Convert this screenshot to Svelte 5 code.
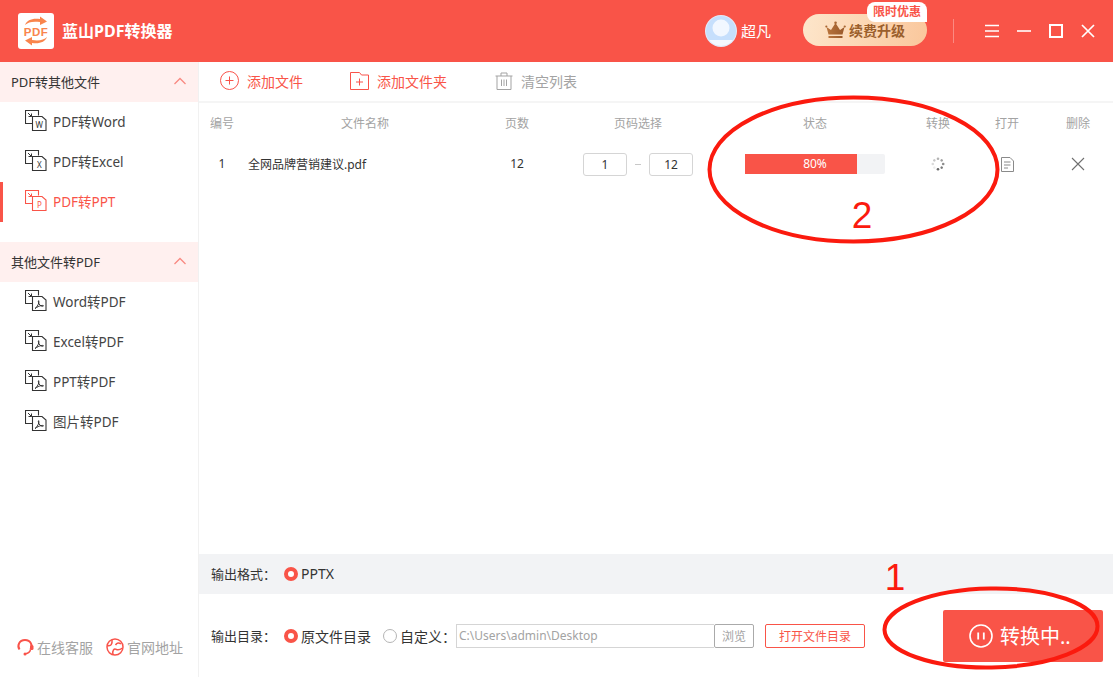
<script>
  const groups = [
    {
      title: 'PDF转其他文件',
      items: [
        { label: 'PDF转Word', mark: 'W' },
        { label: 'PDF转Excel', mark: 'X' },
        { label: 'PDF转PPT', mark: 'P', active: true }
      ]
    },
    {
      title: '其他文件转PDF',
      items: [
        { label: 'Word转PDF' },
        { label: 'Excel转PDF' },
        { label: 'PPT转PDF' },
        { label: '图片转PDF' }
      ]
    }
  ];
  const heads = ['编号', '文件名称', '页数', '页码选择', '状态', '转换', '打开', '删除'];
  const spinner = [0, 45, 90, 135, 180, 225, 270, 315];
</script>

<div class="app">
  <header class="topbar">
    <div class="logo">
      <svg width="36" height="36" viewBox="0 0 36 36">
        <rect width="36" height="36" rx="3" fill="#fff" />
        <path d="M7 12 C9 7 14 5 22 6 V3.500 L29 8.500 L22 12 V9 C15 8 10 9 7 12Z" fill="#f9854d" />
        <path d="M29 24 C27 29 22 31 14 30 V32.500 L7 27.500 L14 24 V27 C21 28 26 27 29 24Z" fill="#f9854d" />
        <text x="18" y="22.500" text-anchor="middle" class="logo-text">PDF</text>
      </svg>
    </div>
    <div class="app-name">蓝山PDF转换器</div>
    <div class="top-right">
      <div class="avatar">
        <svg width="32" height="32" viewBox="0 0 32 32">
          <defs><clipPath id="av"><circle cx="16" cy="16" r="15" /></clipPath></defs>
          <circle cx="16" cy="16" r="16" fill="#e4eaf8" />
          <circle cx="16" cy="16" r="15" fill="#c6dffc" />
          <g clip-path="url(#av)">
            <circle cx="16" cy="13" r="8.500" fill="#f1f7ff" />
            <rect x="0" y="25" width="32" height="8" fill="#f4f8fe" />
          </g>
        </svg>
      </div>
      <span class="user">超凡</span>
      <button class="vip">
        <svg width="21" height="18" viewBox="0 0 21 18">
          <defs>
            <linearGradient id="crown" x1="0" x2="1" y1="0" y2="0">
              <stop offset="0" stop-color="#b9743c" />
              <stop offset="1" stop-color="#99592a" />
            </linearGradient>
          </defs>
          <path d="M1.500 6 L6 9 L10.500 2 L15 9 L19.500 6 L17.500 13.500 H3.500Z" fill="url(#crown)" />
          <circle cx="10.500" cy="1.800" r="1.300" fill="url(#crown)" />
          <circle cx="1.300" cy="5.500" r="1.100" fill="url(#crown)" />
          <circle cx="19.700" cy="5.500" r="1.100" fill="url(#crown)" />
          <rect x="3.500" y="15" width="14" height="2" fill="url(#crown)" />
        </svg>
        续费升级
        <span class="promo">限时优惠</span>
      </button>
      <i class="sep"></i>
      <div class="win-btns">
        <svg width="14" height="14" viewBox="0 0 14 14"><path d="M0 1.500H14M0 7H14M0 12.500H14" stroke="#fff" stroke-width="1.600" fill="none" /></svg>
        <svg width="14" height="14" viewBox="0 0 14 14"><path d="M0 7H14" stroke="#fff" stroke-width="1.600" fill="none" /></svg>
        <svg width="14" height="14" viewBox="0 0 14 14"><rect x="1" y="1" width="12" height="12" stroke="#fff" stroke-width="2" fill="none" /></svg>
        <svg width="14" height="14" viewBox="0 0 14 14"><path d="M1 1L13 13M13 1L1 13" stroke="#fff" stroke-width="1.700" fill="none" /></svg>
      </div>
    </div>
  </header>

  <div class="body">
    <aside class="sidebar">
      <div class="nav">
        {#each groups as group}
          <section class="group">
            <div class="group-title">
              <span>{group.title}</span>
              <svg width="14" height="8" viewBox="0 0 14 8"><path d="M1.500 7L7 1.500L12.500 7" stroke="#f98a82" stroke-width="1.300" fill="none" /></svg>
            </div>
            {#each group.items as item}
              <div class="nav-item" class:active={item.active}>
                <svg width="22" height="22" viewBox="0 0 22 22" fill="none" stroke="currentColor" class="file-icon">
                  <path d="M7 13.500H0.500V0.500H13.500V5.500" stroke-width="1.100" />
                  <path d="M3 3L6.500 6.500M6.500 3.500V6.500H3.500" stroke-width="1" />
                  <path d="M7.500 6.500H17L21 10V20.500H7.500Z" fill="#fff" stroke-width="1.100" />
                  {#if item.mark}
                    <text x="14.300" y="17.500" text-anchor="middle" class="file-mark">{item.mark}</text>
                  {:else}
                    <path d="M10 18.500C12.500 17 14.500 12.500 13.800 10.800C13.200 10 12.800 12.500 15 15.200C16 16.300 18.300 16.500 18.500 15.800C18.300 15 14.500 15.300 10 18.500Z" stroke-width="1" />
                  {/if}
                </svg>
                <span>{item.label}</span>
              </div>
            {/each}
          </section>
        {/each}
      </div>
      <div class="support">
        <span class="link">
          <svg width="18" height="18" viewBox="0 0 18 18" fill="none" stroke="#f9534a" stroke-width="2">
            <path d="M3.500 11.500C1 8 3 2 9 2C15 2 17 8 14.500 11.500" />
            <path d="M14.500 11.500C14 14 12 15.500 9.500 15.800" stroke-width="1.400" />
            <rect x="14" y="7" width="3.500" height="5" rx="1.500" fill="#f9534a" stroke="none" />
            <circle cx="9" cy="16" r="1.500" fill="#f9534a" stroke="none" />
          </svg>
          在线客服
        </span>
        <span class="link">
          <svg width="18" height="18" viewBox="0 0 18 18" fill="none" stroke="#f9534a" stroke-width="1.500">
            <circle cx="9" cy="9" r="8" />
            <path d="M1.500 7.500C5 8.500 6.500 6 6 2M7 16.500C6 12.500 8 10 10.500 11.500C12.500 12.500 14.500 11.500 16.500 10M9.500 7C11 4.500 13 4.500 15 6" />
          </svg>
          官网地址
        </span>
      </div>
    </aside>

    <main class="main">
      <div class="toolbar">
        <span class="tool">
          <svg width="19" height="19" viewBox="0 0 19 19" fill="none" stroke="#f9534a"><circle cx="9.500" cy="9.500" r="9" /><path d="M9.500 5.500V13.500M5.500 9.500H13.500" /></svg>
          添加文件
        </span>
        <span class="tool">
          <svg width="19" height="18" viewBox="0 0 19 18" fill="none" stroke="#f9534a"><path d="M0.500 17.500V0.500H9.500L11.500 3H18.500V17.500Z" /><path d="M9.500 6.500V13.500M6 10H13" /></svg>
          添加文件夹
        </span>
        <span class="tool disabled">
          <svg width="18" height="18" viewBox="0 0 18 18" fill="none" stroke="#a3a3a3"><path d="M0.500 4H17.500M6 4V1H12V4M2 4V17.500H16V4" /><path d="M6.500 7.500V14M9 7.500V14M11.500 7.500V14" /></svg>
          清空列表
        </span>
      </div>

      <div class="row heads">
        {#each heads as h}
          <span>{h}</span>
        {/each}
      </div>

      <div class="row file">
        <span class="cell-text">1</span>
        <span class="cell-text name">全网品牌营销建议.pdf</span>
        <span class="cell-text">12</span>
        <span class="range">
          <input class="page" value="1" readonly />
          <i class="dash"></i>
          <input class="page" value="12" readonly />
        </span>
        <span class="status">
          <div class="bar">
            <div class="fill" style="width: 80%"></div>
            <div class="pct">80%</div>
          </div>
        </span>
        <span class="cell-icon">
          <svg width="14" height="14" viewBox="0 0 14 14">
            {#each spinner as a, i}
              <circle cx="7" cy="1.800" r="1.300" fill="#666" opacity={0.12 + ((i + 3) % 8) * 0.125} transform="rotate({a} 7 7)" />
            {/each}
          </svg>
        </span>
        <span class="cell-icon">
          <svg width="13" height="15" viewBox="0 0 13 15" fill="none" stroke="#8a8a8a"><path d="M0.500 0.500H9L12.500 4V14.500H0.500Z" /><path d="M3 5H9.500M3 8H9.500M3 11H7" /></svg>
        </span>
        <span class="cell-icon">
          <svg width="14" height="14" viewBox="0 0 14 14" fill="none" stroke="#6f6f6f" stroke-width="1.100"><path d="M1 1L13 13M13 1L1 13" /></svg>
        </span>
      </div>

      <div class="spacer"></div>

      <div class="format">
        <span class="label">输出格式：</span>
        <i class="radio on"></i>
        <span>PPTX</span>
      </div>

      <div class="output">
        <span class="label">输出目录：</span>
        <i class="radio on"></i>
        <span class="opt">原文件目录</span>
        <i class="radio"></i>
        <span>自定义：</span>
        <div class="path">
          <input value="C:\Users\admin\Desktop" readonly />
          <button class="browse">浏览</button>
        </div>
        <button class="open">打开文件目录</button>
        <button class="convert">
          <svg width="24" height="24" viewBox="0 0 24 24" fill="none" stroke="#fff">
            <circle cx="12" cy="12" r="11" stroke-width="1.600" />
            <path d="M9.200 8.500V15.500M14.800 8.500V15.500" stroke-width="1.800" />
          </svg>
          转换中..
        </button>
      </div>
    </main>
  </div>

  <svg class="marks" width="1113" height="677" viewBox="0 0 1113 677" fill="none" stroke="#fb1a0e" stroke-width="4">
    <ellipse cx="853.500" cy="169.500" rx="144" ry="72" />
    <ellipse cx="991" cy="628" rx="106.500" ry="39.500" transform="rotate(-1 991 628)" />
    <text x="862" y="228" class="num">2</text>
    <text x="895" y="590" class="num">1</text>
  </svg>
</div>

<style>
  :global(body) {
    margin: 0;
    background: #fff;
  }

  .app {
    position: relative;
    width: 1113px;
    height: 677px;
    display: flex;
    flex-direction: column;
    overflow: hidden;
    font-family: "Noto Sans", "Noto Sans CJK SC", sans-serif;
    font-size: 14px;
    color: #333;
  }

  button {
    font-family: inherit;
    cursor: pointer;
  }

  .topbar {
    height: 62px;
    flex: none;
    display: flex;
    align-items: center;
    padding-left: 18px;
    background: #f95448;
    color: #fff;
  }

  .logo {
    height: 36px;
    margin-right: 8px;
  }

  .logo-text {
    font-family: "Liberation Sans", sans-serif;
    font-size: 11.500px;
    font-weight: 700;
    letter-spacing: 0.500px;
    fill: #f9854d;
    stroke: none;
  }

  .app-name {
    font-size: 16px;
    font-weight: 700;
    padding-bottom: 2px;
  }

  .top-right {
    margin-left: auto;
    display: flex;
    align-items: center;
  }

  .avatar {
    height: 32px;
    margin-right: 4px;
  }

  .user {
    font-size: 15px;
    width: 62px;
    padding-bottom: 2px;
  }

  .vip {
    position: relative;
    width: 124px;
    height: 32px;
    margin-top: -2px;
    border: 0;
    border-radius: 16px;
    display: flex;
    align-items: center;
    justify-content: center;
    gap: 3px;
    padding: 0;
    background: linear-gradient(100deg, #fde6cb, #fac79c);
    color: #9b5f2c;
    font-size: 14px;
    font-weight: 700;
  }

  .promo {
    position: absolute;
    top: -12px;
    right: 0;
    width: 60px;
    height: 20px;
    border-radius: 8px 8px 0 8px;
    background: #fff;
    color: #f95448;
    font-size: 12px;
    line-height: 19px;
    text-align: center;
  }

  .sep {
    width: 1px;
    height: 24px;
    margin: 0 31px 0 26px;
    background: #fb8a82;
  }

  .win-btns {
    display: flex;
    gap: 18px;
    margin-right: 18px;
  }

  .win-btns svg {
    display: block;
  }

  .body {
    flex: 1;
    display: flex;
    min-height: 0;
  }

  .sidebar {
    width: 199px;
    box-sizing: border-box;
    flex: none;
    display: flex;
    flex-direction: column;
    border-right: 1px solid #f1f1f1;
  }

  .nav {
    flex: 1;
  }

  .group {
    margin-bottom: 20px;
  }

  .group-title {
    box-sizing: border-box;
    height: 40px;
    display: flex;
    align-items: center;
    justify-content: space-between;
    padding: 0 11px 2px;
    background: #fff0ef;
    font-size: 13px;
  }

  .nav-item {
    box-sizing: border-box;
    height: 40px;
    display: flex;
    align-items: center;
    gap: 6px;
    padding-left: 25px;
    padding-bottom: 2px;
    color: #444;
    font-size: 13.500px;
  }

  .nav-item.active {
    border-left: 3px solid #f95448;
    padding-left: 22px;
    color: #f95448;
  }

  .file-icon {
    color: #333;
  }

  .active .file-icon {
    color: #f95448;
  }

  .file-mark {
    font-size: 8px;
    stroke: none;
    fill: currentColor;
  }

  .support {
    height: 73px;
    display: flex;
    gap: 13px;
    padding-left: 16px;
    color: #a3a3a3;
  }

  .link {
    display: flex;
    align-items: center;
    gap: 3px;
    height: 20px;
    margin-top: 33px;
  }

  .main {
    flex: 1;
    min-width: 0;
    display: flex;
    flex-direction: column;
  }

  .toolbar {
    height: 41px;
    flex: none;
    display: flex;
    align-items: center;
    box-sizing: border-box;
    border-bottom: 2px solid #f5f5f5;
    padding: 0 0 2px 21px;
    color: #f95448;
  }

  .tool {
    display: flex;
    align-items: center;
    gap: 8px;
    margin-right: 47px;
  }

  .tool.disabled {
    margin-left: 1px;
    color: #a3a3a3;
  }

  .row {
    display: grid;
    grid-template-columns: 46px 240px 64px 178px 176px 70px 68px 72px;
    align-items: center;
    justify-items: center;
  }

  .row > :last-child {
    padding-left: 2px;
  }

  .heads {
    height: 40px;
    font-size: 12px;
    color: #a3a3a3;
  }

  .file {
    height: 42px;
    font-size: 12px;
    color: #333;
  }

  .cell-text {
    padding-bottom: 1px;
  }

  .name {
    justify-self: start;
    padding-left: 3px;
  }

  .range {
    display: flex;
    align-items: center;
    gap: 8px;
  }

  .page {
    width: 42px;
    height: 21px;
    padding: 0;
    border: 1px solid #d5d5d5;
    border-radius: 3px;
    outline: none;
    font: inherit;
    color: #333;
    text-align: center;
  }

  .dash {
    width: 6px;
    height: 1px;
    background: #c8c8c8;
  }

  .status {
    justify-self: stretch;
    padding-left: 18px;
  }

  .bar {
    position: relative;
    width: 140px;
    height: 20px;
    border-radius: 2px;
    background: #f2f3f5;
  }

  .fill {
    height: 100%;
    background: #f95448;
  }

  .pct {
    position: absolute;
    inset: 0;
    font-size: 12px;
    line-height: 20px;
    text-align: center;
    color: #fff;
  }

  .cell-icon {
    display: flex;
  }

  .spacer {
    flex: 1;
  }

  .format {
    box-sizing: border-box;
    height: 40px;
    flex: none;
    display: flex;
    align-items: center;
    padding: 0 0 1px 12px;
    background: #f2f3f5;
  }

  .label {
    margin-right: 3px;
    font-size: 13px;
    width: 70px;
  }

  .radio {
    box-sizing: border-box;
    width: 14px;
    height: 14px;
    margin-right: 3px;
    border: 1px solid #b5b5b5;
    border-radius: 50%;
    background: #fff;
  }

  .radio.on {
    border: 4px solid #f95448;
  }

  .output {
    height: 83px;
    flex: none;
    display: flex;
    align-items: center;
    padding-left: 12px;
    padding-right: 10px;
    box-sizing: border-box;
  }

  .opt {
    margin-right: 12px;
  }

  .path {
    display: flex;
  }

  .path input {
    box-sizing: border-box;
    width: 258px;
    height: 24px;
    padding: 0 2px;
    border: 1px solid #d5d5d5;
    border-right: 0;
    outline: none;
    font: inherit;
    font-size: 12px;
    color: #a3a3a3;
  }

  .browse {
    width: 40px;
    height: 24px;
    padding: 0;
    border: 1px solid #aaa;
    border-radius: 2px;
    background: #fff;
    font-size: 12px;
    color: #a3a3a3;
  }

  .open {
    width: 100px;
    height: 24px;
    margin-left: 11px;
    padding: 0;
    border: 1px solid #f95448;
    border-radius: 2px;
    background: #fff;
    font-size: 12px;
    color: #f95448;
  }

  .convert {
    width: 160px;
    height: 52px;
    margin-left: auto;
    padding: 0 0 0 26px;
    border: 0;
    border-radius: 2px;
    display: flex;
    align-items: center;
    gap: 7px;
    background: #f95448;
    color: #fff;
    font-size: 20px;
  }

  .marks {
    position: absolute;
    inset: 0;
    pointer-events: none;
  }

  .num {
    font-size: 37px;
    fill: #fb1a0e;
    stroke: none;
    text-anchor: middle;
    font-family: "Liberation Sans", sans-serif;
  }
</style>
